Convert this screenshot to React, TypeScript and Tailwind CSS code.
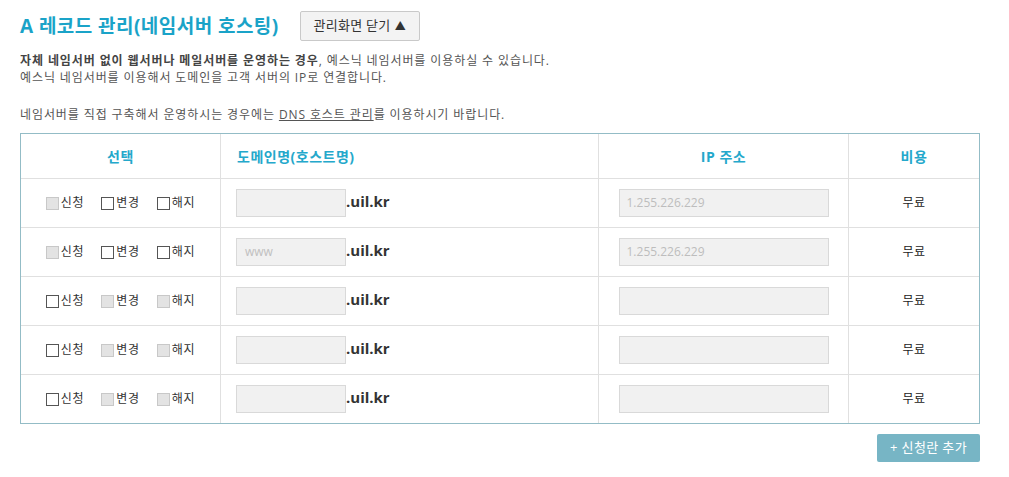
import React from 'react';

type Row = {
    checks: [boolean, boolean, boolean]; // true = disabled (grey)
    host?: string;
    ip?: string;
};

const rows: Row[] = [
    { checks: [true, false, false], ip: '1.255.226.229' },
    { checks: [true, false, false], host: 'www', ip: '1.255.226.229' },
    { checks: [false, true, true] },
    { checks: [false, true, true] },
    { checks: [false, true, true] },
];

const labels = ['신청', '변경', '해지'];

const Check: React.FC<{ disabled: boolean; label: string }> = ({ disabled, label }) => (
    <label className="flex items-center gap-[2px]">
        <span
            className={
                disabled
                    ? 'w-[13px] h-[13px] border border-[#c8c8c8] bg-[#e3e3e3]'
                    : 'w-[13px] h-[13px] border border-[#555] bg-white'
            }
        />
        <span className="text-[12px] text-[#333] tracking-[0.7px]">{label}</span>
    </label>
);

export default function App() {
    return (
        <div
            className="w-[1009px] h-[477px] bg-white px-5 pt-[11px]"
            style={{ fontFamily: '"Open Sans", "Noto Sans CJK KR", sans-serif' }}
        >
            {/* Title */}
            <div className="flex items-center gap-[21px]">
                <h2 className="text-[19px] font-bold text-[#1aa3c8] tracking-[0.45px] leading-[29px]">
                    A 레코드 관리(네임서버 호스팅)
                </h2>
                <button className="h-[30px] w-[120px] border border-[#c9c9c9] rounded-[2px] bg-[#f3f3f3] text-[13px] text-[#333] flex items-center justify-center gap-1 tracking-[0.3px]">
                    관리화면 닫기 <span className="text-[11px]">▲</span>
                </button>
            </div>

            {/* Description */}
            <div className="mt-[11px] text-[12px] text-[#555] leading-[17px] tracking-[0.9px]">
                <p>
                    <b className="text-[#444]">자체 네임서버 없이 웹서버나 메일서버를 운영하는 경우</b>, 예스닉 네임서버를 이용하실 수 있습니다.
                </p>
                <p>예스닉 네임서버를 이용해서 도메인을 고객 서버의 IP로 연결합니다.</p>
                <p className="mt-[20px]">
                    네임서버를 직접 구축해서 운영하시는 경우에는 <span className="underline">DNS 호스트 관리</span>를 이용하시기 바랍니다.
                </p>
            </div>

            {/* Table */}
            <div className="mt-[10px] w-[960px] border border-[#93bcc6]">
                <div className="grid grid-cols-[200px_378px_250px_1fr] h-[45px] border-b border-[#e0e0e0] text-[14px] font-bold text-[#24a8cb] tracking-[0.5px]">
                    <div className="flex items-center justify-center border-r border-[#e0e0e0]">선택</div>
                    <div className="flex items-center pl-[16px] border-r border-[#e0e0e0]">도메인명(호스트명)</div>
                    <div className="flex items-center justify-center border-r border-[#e0e0e0]">IP 주소</div>
                    <div className="flex items-center justify-center">비용</div>
                </div>
                {rows.map((row, i) => (
                    <div
                        key={i}
                        className={
                            i < rows.length - 1
                                ? 'grid grid-cols-[200px_378px_250px_1fr] h-[49px] border-b border-[#e0e0e0]'
                                : 'grid grid-cols-[200px_378px_250px_1fr] h-[48px]'
                        }
                    >
                        <div className="flex items-center justify-center gap-[17px] border-r border-[#e0e0e0]">
                            {labels.map((l, j) => (
                                <Check key={l} disabled={row.checks[j]} label={l} />
                            ))}
                        </div>
                        <div className="flex items-center pl-[15px] border-r border-[#e0e0e0]">
                            <div className="w-[110px] h-[28px] border border-[#d9d9d9] bg-[#f1f1f1] flex items-center px-2 text-[12px] text-[#c0c0c0]">
                                {row.host}
                            </div>
                            <span className="text-[15px] font-bold text-[#333] -mt-[3px]">.uil.kr</span>
                        </div>
                        <div className="flex items-center justify-center border-r border-[#e0e0e0]">
                            <div className="w-[210px] h-[28px] border border-[#d9d9d9] bg-[#f1f1f1] flex items-center px-[7px] text-[12px] text-[#bdbdbd]">
                                {row.ip}
                            </div>
                        </div>
                        <div className="flex items-center justify-center text-[12px] text-[#222] tracking-[0.5px]">무료</div>
                    </div>
                ))}
            </div>

            <div className="w-[960px] flex justify-end mt-[10px]">
                <button className="h-[28px] w-[103px] rounded-[2px] bg-[#77b5c5] text-white text-[13px] tracking-[0.4px]">
                    + 신청란 추가
                </button>
            </div>
        </div>
    );
}
